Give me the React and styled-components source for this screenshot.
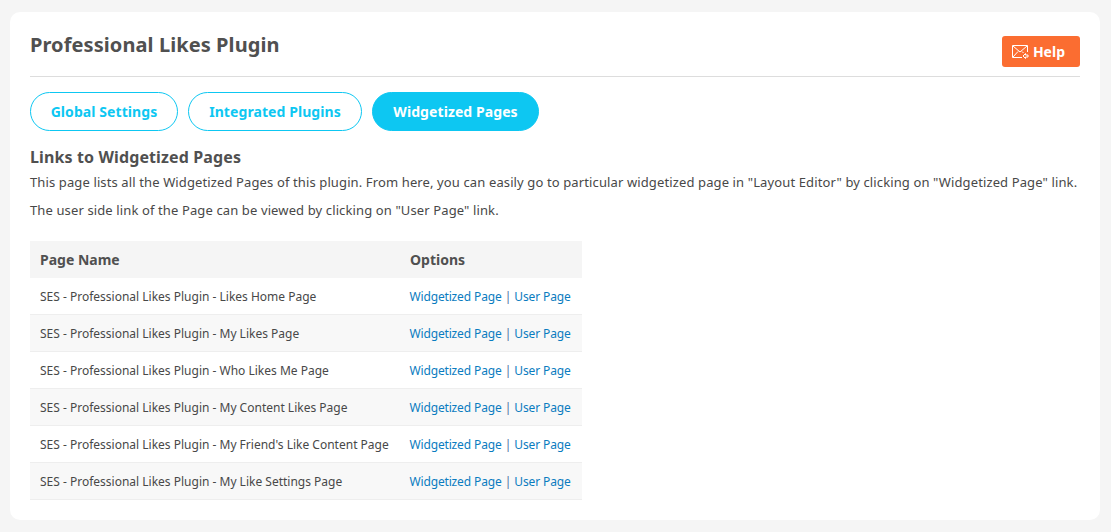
import React from "react";
import styled, { createGlobalStyle } from "styled-components";

const GlobalStyle = createGlobalStyle`
  html, body {
    margin: 0;
    padding: 0;
    background: #f5f5f5;
  }
  * {
    box-sizing: border-box;
  }
`;

const pages = [
  "SES - Professional Likes Plugin - Likes Home Page",
  "SES - Professional Likes Plugin - My Likes Page",
  "SES - Professional Likes Plugin - Who Likes Me Page",
  "SES - Professional Likes Plugin - My Content Likes Page",
  "SES - Professional Likes Plugin - My Friend's Like Content Page",
  "SES - Professional Likes Plugin - My Like Settings Page",
];

const tabs = [
  { id: 1, title: "Global Settings", width: 148 },
  { id: 2, title: "Integrated Plugins", width: 174 },
  { id: 3, title: "Widgetized Pages", width: 167, active: true },
];

const App = () => {
  return (
    <Page>
      <GlobalStyle />
      <Card>
        <Header>
          <Title>Professional Likes Plugin</Title>
          <HelpButton href="#">
            <svg width="17" height="14" viewBox="0 0 17 14" fill="none" stroke="#fff" strokeWidth="1">
              <path d="M10 12.5H.5V.5h15v6.5" />
              <path d="M1 1l7 6 7-6M1 12l5-5.5M10 6.5l1.5 1.5" />
              <path d="M11 11l2.5-2.5V10H16v2h-2.5v1.5z" />
            </svg>
            Help
          </HelpButton>
        </Header>

        <Tabs>
          {tabs.map((tab) => (
            <Tab key={tab.id} href="#" $active={tab.active} $width={tab.width}>
              {tab.title}
            </Tab>
          ))}
        </Tabs>

        <Heading>Links to Widgetized Pages</Heading>
        <Description>
          This page lists all the Widgetized Pages of this plugin. From here, you can easily go to
          particular widgetized page in "Layout Editor" by clicking on "Widgetized Page" link.
        </Description>
        <Description>The user side link of the Page can be viewed by clicking on "User Page" link.</Description>

        <Table>
          <thead>
            <tr>
              <HeadCell $width={370}>Page Name</HeadCell>
              <HeadCell $width={182}>Options</HeadCell>
            </tr>
          </thead>
          <tbody>
            {pages.map((page) => (
              <Row key={page}>
                <Cell>{page}</Cell>
                <OptionsCell>
                  <LinkText href="#">Widgetized Page</LinkText> | <LinkText href="#">User Page</LinkText>
                </OptionsCell>
              </Row>
            ))}
          </tbody>
        </Table>
      </Card>
    </Page>
  );
};

const Page = styled.div`
  height: 532px;
  padding: 12px 11px 12px 10px;
  font-family: "Noto Sans", "Open Sans", sans-serif;
  color: #555;
`;

const Card = styled.div`
  height: 508px;
  padding: 0 20px;
  background: #fff;
  border-radius: 10px;
`;

const Header = styled.div`
  display: flex;
  justify-content: space-between;
  height: 65px;
  border-bottom: 1px solid #ddd;
`;

const Title = styled.h1`
  margin: 20px 0 0;
  font-size: 20px;
  line-height: 26px;
  letter-spacing: 0.08px;
  font-weight: 700;
  color: #505050;
`;

const HelpButton = styled.a`
  display: flex;
  align-items: center;
  gap: 4px;
  height: 31px;
  margin-top: 24px;
  padding: 0 15px 0 10px;
  background: #fb6d31;
  border-radius: 3px;
  color: #fff;
  font-size: 14px;
  font-weight: 700;
  text-decoration: none;
`;

const Tabs = styled.div`
  display: flex;
  gap: 10px;
  margin-top: 15px;
`;

const Tab = styled.a`
  display: flex;
  align-items: center;
  justify-content: center;
  width: ${(props) => props.$width}px;
  height: 39px;
  border: 1px solid #0dc7f2;
  border-radius: 20px;
  background: ${(props) => (props.$active ? "#0dc7f2" : "#fff")};
  color: ${(props) => (props.$active ? "#fff" : "#0dc7f2")};
  font-size: 14px;
  letter-spacing: 0.08px;
  font-weight: 700;
  text-decoration: none;
`;

const Heading = styled.h2`
  margin: 15px 0 0;
  font-size: 16px;
  line-height: 22px;
  letter-spacing: 0.12px;
  font-weight: 700;
  color: #505050;
`;

const Description = styled.p`
  margin: 0;
  font-size: 13px;
  line-height: 28px;
  letter-spacing: 0.12px;
  white-space: nowrap;
  color: #484848;
`;

const Table = styled.table`
  width: 552px;
  margin-top: 17px;
  border-collapse: separate;
  border-spacing: 0;
  table-layout: fixed;
`;

const HeadCell = styled.th`
  width: ${(props) => props.$width}px;
  height: 37px;
  padding: 0 10px;
  background: #f5f5f5;
  font-size: 14px;
  font-weight: 700;
  text-align: left;
  color: #505050;
`;

const Row = styled.tr`
  &:nth-child(even) {
    background: #f8f8f8;
  }
`;

const Cell = styled.td`
  height: 37px;
  padding: 0 10px;
  border-bottom: 1px solid #eee;
  font-size: 12px;
  white-space: nowrap;
  color: #484848;
`;

const OptionsCell = styled(Cell)`
  padding-left: 9.5px;
  letter-spacing: -0.16px;
  word-spacing: 0.2px;
  color: #4f6f9f;
`;

const LinkText = styled.a`
  color: #0a7cc0;
  text-decoration: none;
`;

export default App;
